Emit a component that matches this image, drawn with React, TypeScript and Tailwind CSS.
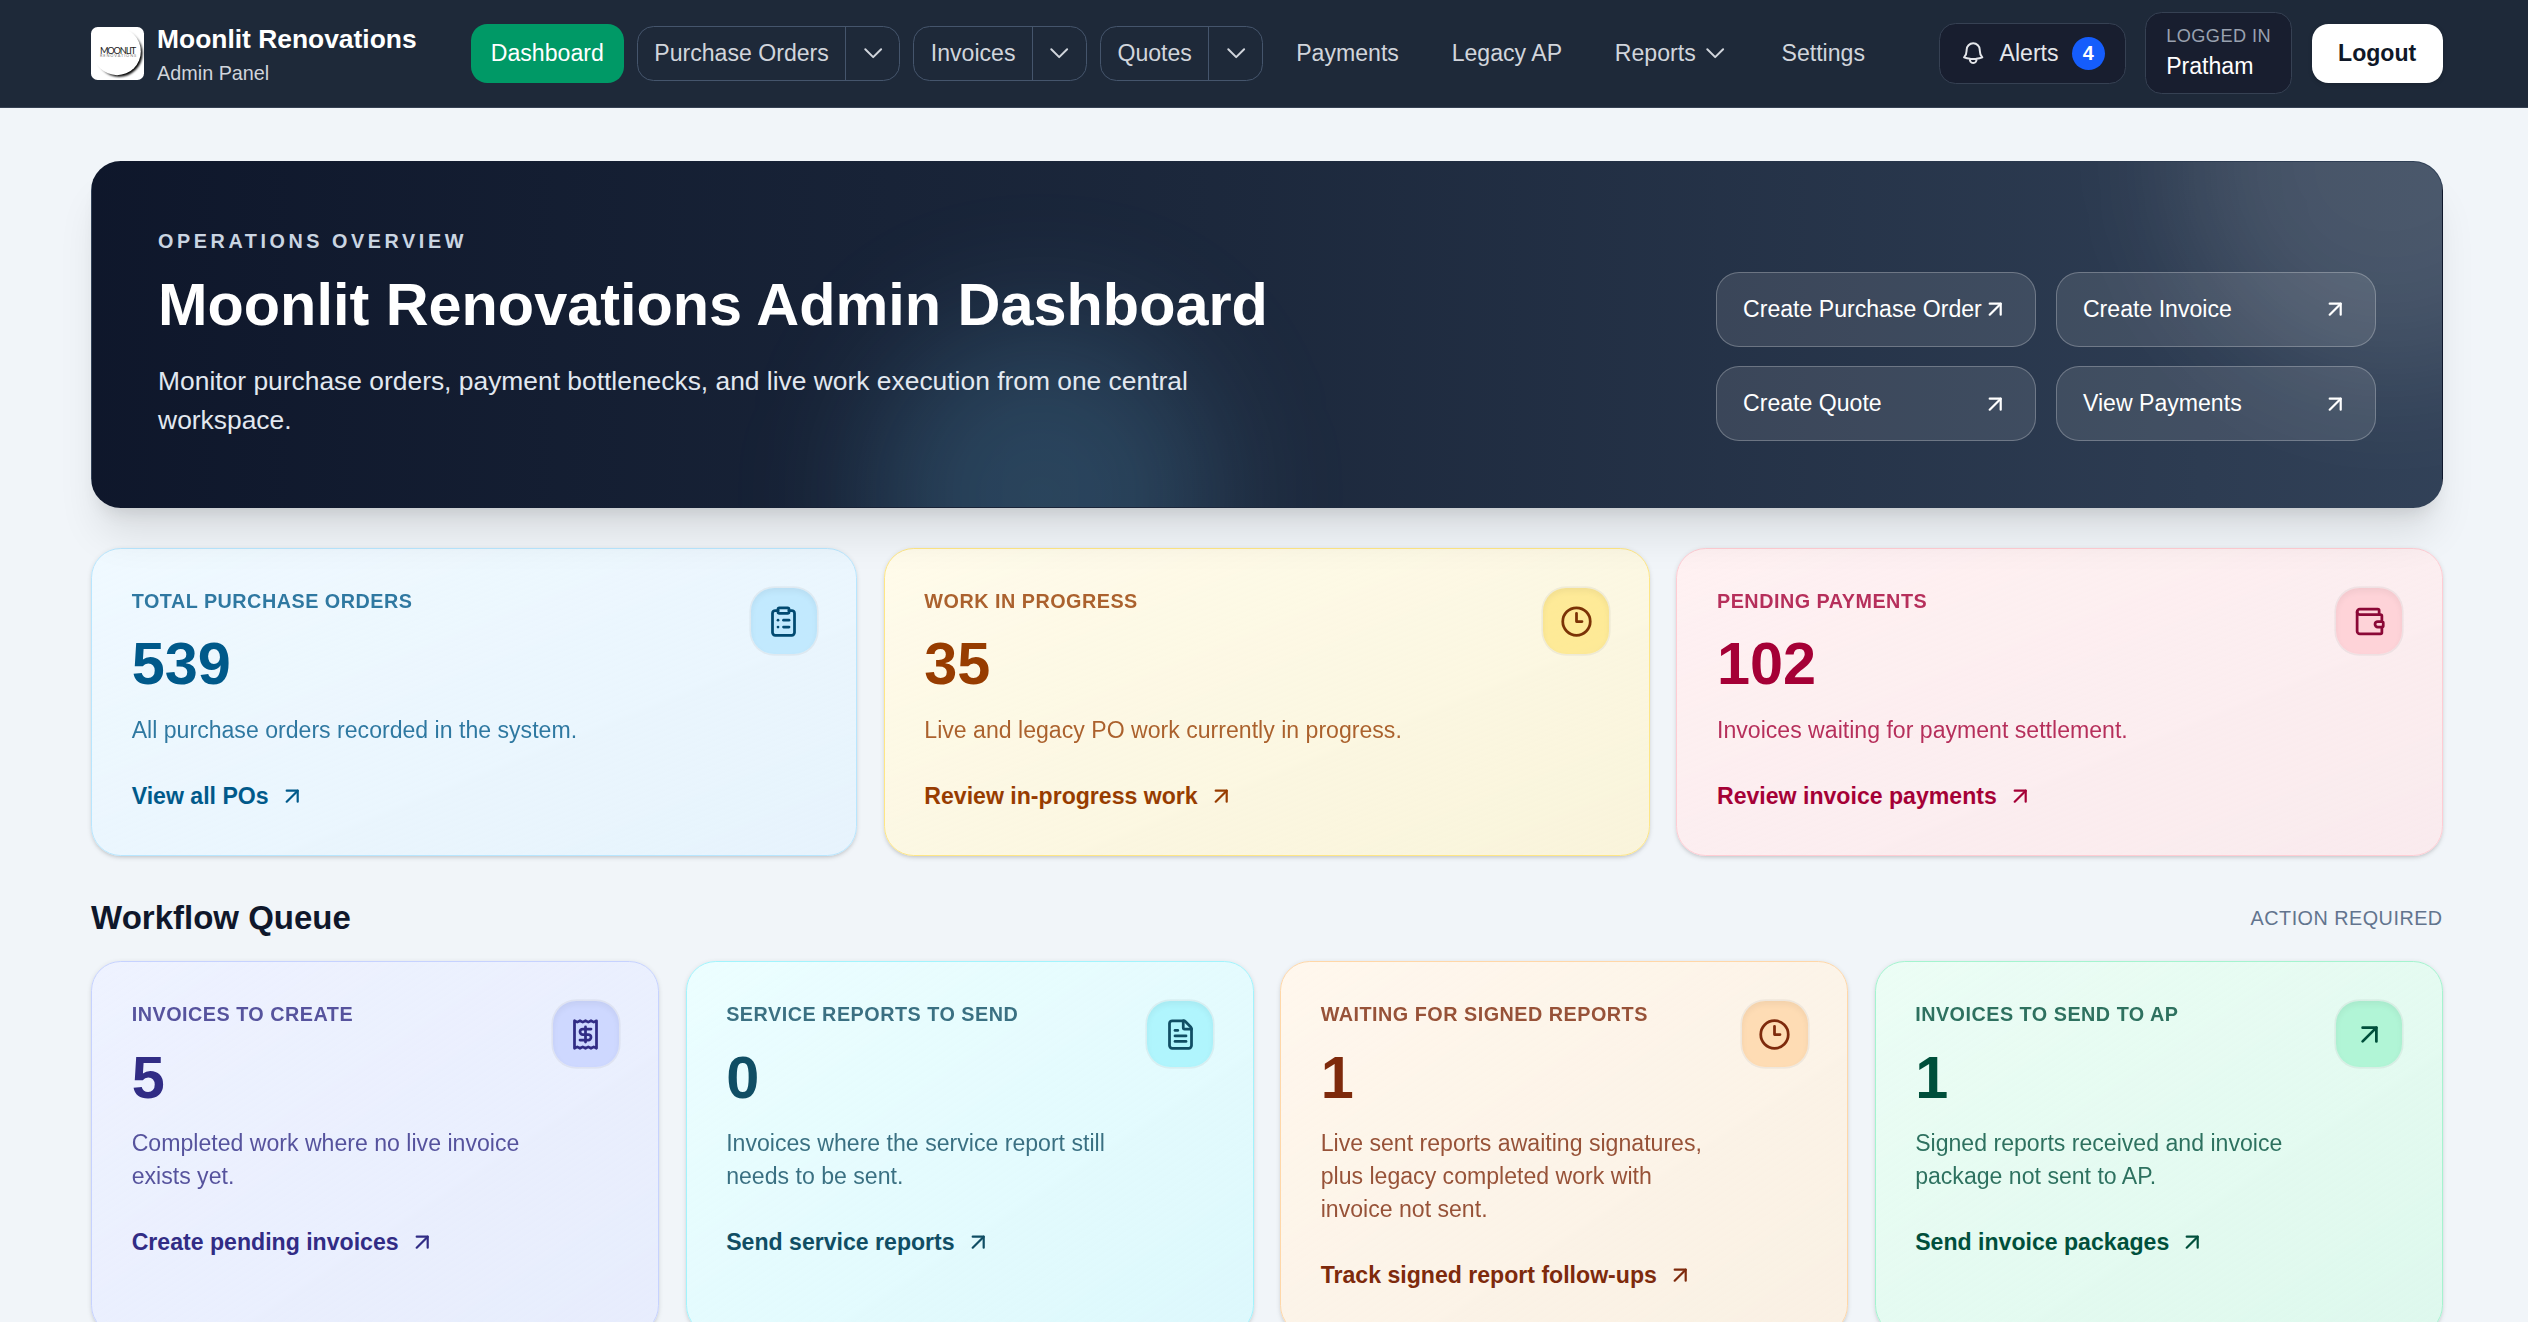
import type { ReactNode } from "react";
import { ArrowUpRight, ClipboardList, Clock3, FileText, Receipt, Wallet, type LucideIcon } from "lucide-react";
import { clsx } from "clsx";

type Tone = {
  card: string;
  text: string;
  icon: string;
};

type Stat = {
  label: string;
  value: number;
  description: string;
  action: string;
  icon: LucideIcon;
  tone: Tone;
};

const quickActions = ["Create Purchase Order", "Create Invoice", "Create Quote", "View Payments"];

const overview: Stat[] = [
  {
    label: "Total Purchase Orders",
    value: 539,
    description: "All purchase orders recorded in the system.",
    action: "View all POs",
    icon: ClipboardList,
    tone: {
      card: "border-sky-200 from-sky-50 to-sky-100/60",
      text: "text-sky-800",
      icon: "bg-sky-200/80 text-sky-900"
    }
  },
  {
    label: "Work In Progress",
    value: 35,
    description: "Live and legacy PO work currently in progress.",
    action: "Review in-progress work",
    icon: Clock3,
    tone: {
      card: "border-amber-200 from-amber-50 to-amber-100/60",
      text: "text-amber-800",
      icon: "bg-amber-200/80 text-amber-900"
    }
  },
  {
    label: "Pending Payments",
    value: 102,
    description: "Invoices waiting for payment settlement.",
    action: "Review invoice payments",
    icon: Wallet,
    tone: {
      card: "border-rose-200 from-rose-50 to-rose-100/60",
      text: "text-rose-800",
      icon: "bg-rose-200/80 text-rose-900"
    }
  }
];

const workflow: Stat[] = [
  {
    label: "Invoices To Create",
    value: 5,
    description: "Completed work where no live invoice exists yet.",
    action: "Create pending invoices",
    icon: Receipt,
    tone: {
      card: "border-indigo-200 from-indigo-50 to-indigo-100/60",
      text: "text-indigo-900",
      icon: "bg-indigo-200/80 text-indigo-900"
    }
  },
  {
    label: "Service Reports To Send",
    value: 0,
    description: "Invoices where the service report still needs to be sent.",
    action: "Send service reports",
    icon: FileText,
    tone: {
      card: "border-cyan-200 from-cyan-50 to-cyan-100/60",
      text: "text-cyan-900",
      icon: "bg-cyan-200/80 text-cyan-900"
    }
  },
  {
    label: "Waiting For Signed Reports",
    value: 1,
    description: "Live sent reports awaiting signatures, plus legacy completed work with invoice not sent.",
    action: "Track signed report follow-ups",
    icon: Clock3,
    tone: {
      card: "border-orange-200 from-orange-50 to-orange-100/60",
      text: "text-orange-900",
      icon: "bg-orange-200/80 text-orange-900"
    }
  },
  {
    label: "Invoices To Send To AP",
    value: 1,
    description: "Signed reports received and invoice package not sent to AP.",
    action: "Send invoice packages",
    icon: ArrowUpRight,
    tone: {
      card: "border-emerald-200 from-emerald-50 to-emerald-100/60",
      text: "text-emerald-900",
      icon: "bg-emerald-200/80 text-emerald-900"
    }
  }
];

function ChevronIcon() {
  return (
    <svg viewBox="0 0 24 24" fill="none" stroke="currentColor" strokeWidth={1.8} strokeLinecap="round" strokeLinejoin="round" className="size-4">
      <path d="m4.8 8.4 7.2 7.2 7.2-7.2" />
    </svg>
  );
}

function BellIcon() {
  return (
    <svg viewBox="0 0 24 24" fill="none" stroke="currentColor" strokeWidth={1.8} strokeLinecap="round" strokeLinejoin="round" className="size-4">
      <path d="M14.857 17.082a23.848 23.848 0 0 0 5.454-1.31A8.967 8.967 0 0 1 18 9.75V9A6 6 0 0 0 6 9v.75a8.967 8.967 0 0 1-2.312 6.022c1.733.64 3.56 1.085 5.455 1.31m5.714 0a24.255 24.255 0 0 1-5.714 0m5.714 0a3 3 0 1 1-5.714 0" />
    </svg>
  );
}

function Logo() {
  return (
    <svg viewBox="0 0 32 32" className="size-8 rounded bg-white">
      <defs>
        <filter id="moon-shade" x="-20%" y="-20%" width="150%" height="150%">
          <feGaussianBlur stdDeviation="0.8" />
        </filter>
        <linearGradient id="moon-fade" x1="0" y1="0" x2="1" y2="1">
          <stop offset="0.35" stopColor="#000" stopOpacity="0" />
          <stop offset="0.7" stopColor="#000" />
        </linearGradient>
      </defs>
      <circle cx="17" cy="15.9" r="14.2" fill="url(#moon-fade)" filter="url(#moon-shade)" />
      <circle cx="15.8" cy="14.8" r="14.4" fill="#fff" />
      <text x="5.4" y="16.2" textLength="22" fontSize="5.6" fill="#222" fontFamily="Lato, sans-serif">
        MOONLIT
      </text>
      <text x="5.4" y="18.4" textLength="22" fontSize="2.4" fill="#777" fontFamily="Lato, sans-serif">
        RENOVATIONS
      </text>
    </svg>
  );
}

function NavItem({ children }: { children: ReactNode }) {
  return <a className="flex items-center gap-1 rounded-[10px] px-3 py-2">{children}</a>;
}

function NavSplit({ label }: { label: string }) {
  return (
    <div className="flex rounded-[10px] border border-slate-600">
      <a className="px-2.5 py-1.5">{label}</a>
      <button className="border-l border-slate-600 px-2">
        <ChevronIcon />
      </button>
    </div>
  );
}

function Header() {
  return (
    <header className="border-b border-gray-700 bg-gray-800">
      <div className="ml-[55.2px] flex h-[64.7px] w-[1425.2px] items-center justify-between">
        <div className="flex items-center">
          <div className="flex items-center gap-2">
            <Logo />
            <div>
              <p className="text-base font-bold text-white">Moonlit Renovations</p>
              <p className="text-xs text-gray-300">Admin Panel</p>
            </div>
          </div>
          <nav className="ml-[33px] flex items-center gap-2 text-sm text-gray-300">
            <a className="rounded-[10px] bg-emerald-600 px-3 py-2 text-white">Dashboard</a>
            <NavSplit label="Purchase Orders" />
            <NavSplit label="Invoices" />
            <NavSplit label="Quotes" />
            <NavItem>Payments</NavItem>
            <NavItem>Legacy AP</NavItem>
            <NavItem>
              Reports
              <ChevronIcon />
            </NavItem>
            <NavItem>Settings</NavItem>
          </nav>
        </div>

        <div className="flex items-center gap-3 text-sm">
          <button className="flex items-center gap-2 rounded-[10px] border border-gray-700 bg-[#181e2f] px-3 py-2 text-gray-200">
            <BellIcon />
            Alerts
            <span className="flex size-5 items-center justify-center rounded-full bg-blue-600 text-xs font-bold text-white">4</span>
          </button>
          <div className="rounded-[10px] border border-gray-700 bg-[#181e2f] px-3 py-1.5">
            <p className="text-[11px] leading-[16.5px] tracking-wide text-gray-400 uppercase">Logged in</p>
            <p className="text-white">Pratham</p>
          </div>
          <button className="rounded-[10px] bg-white px-4 py-2 font-semibold text-gray-900 shadow-sm">Logout</button>
        </div>
      </div>
    </header>
  );
}

function Hero() {
  return (
    <section className="relative overflow-hidden rounded-[18px] border border-transparent bg-linear-to-r from-slate-900 via-slate-800 to-slate-700 p-10 text-white shadow-xl">
      <div className="absolute -top-32 -right-24 size-64 rounded-full bg-white/12 blur-2xl" />
      <div className="absolute -bottom-24 left-1/3 -ml-1 size-52 rounded-full bg-sky-300/18 blur-2xl" />
      <div className="relative flex items-end justify-between">
        <div>
          <p className="text-xs font-semibold tracking-[0.18em] text-slate-300 uppercase">Operations Overview</p>
          <h1 className="mt-2 text-4xl leading-tight font-bold">Moonlit Renovations Admin Dashboard</h1>
          <p className="mt-3 max-w-2xl text-base text-slate-200">
            Monitor purchase orders, payment bottlenecks, and live work execution from one central workspace.
          </p>
        </div>
        <div className="grid w-[400px] grid-cols-2 gap-3">
          {quickActions.map((label) => (
            <a key={label} className="flex items-center justify-between rounded-[14px] border border-white/25 bg-white/10 px-4 py-3 text-sm font-medium whitespace-nowrap">
              {label}
              <ArrowUpRight className="size-4" />
            </a>
          ))}
        </div>
      </div>
    </section>
  );
}

function StatCard({ stat }: { stat: Stat }) {
  const { label, value, description, action, icon: Icon, tone } = stat;

  return (
    <article className={clsx("rounded-[18px] border bg-linear-to-br p-6 shadow-sm", tone.card, tone.text)}>
      <div className="flex items-start justify-between gap-4">
        <div>
          <p className="text-xs font-semibold tracking-wide uppercase opacity-80">{label}</p>
          <p className="mt-3 text-4xl leading-none font-bold">{value}</p>
          <p className="mt-3 text-sm opacity-80">{description}</p>
        </div>
        <div className={clsx("flex size-10 shrink-0 items-center justify-center rounded-[14px] inset-shadow-sm ring-1 ring-black/5", tone.icon)}>
          <Icon className="size-5" />
        </div>
      </div>
      <a className="mt-5 inline-flex items-center gap-1.5 text-sm font-semibold">
        {action}
        <ArrowUpRight className="size-4" />
      </a>
    </article>
  );
}

export default function App() {
  return (
    <div className="h-screen overflow-hidden bg-slate-100">
      <div className="w-[1536px] font-['Liberation_Sans',Arial,sans-serif] [zoom:1.65]">
        <Header />
        <main className="ml-[55.2px] w-[1425.2px] pt-[32.4px] pb-8">
          <Hero />

          <section className="mt-6 grid grid-cols-3 gap-4">
            {overview.map((stat) => (
              <StatCard key={stat.label} stat={stat} />
            ))}
          </section>

          <section className="mt-6">
            <div className="mb-[11.6px] flex items-center justify-between">
              <h2 className="text-xl font-semibold text-slate-900">Workflow Queue</h2>
              <p className="text-xs tracking-wide text-slate-500 uppercase">Action required</p>
            </div>
            <div className="grid grid-cols-4 gap-4">
              {workflow.map((stat) => (
                <StatCard key={stat.label} stat={stat} />
              ))}
            </div>
          </section>
        </main>
      </div>
    </div>
  );
}
